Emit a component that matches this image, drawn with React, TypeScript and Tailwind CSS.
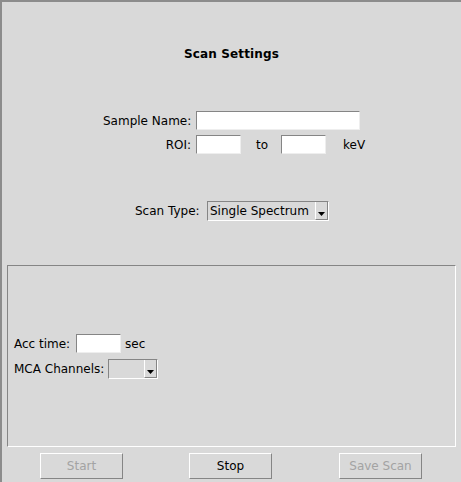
import React from "react";

function Entry({ className }: { className: string }) {
  return (
    <div
      className={
        "h-[19px] bg-white border border-t-[#858585] border-l-[#858585] border-b-[#eeeeee] border-r-[#eeeeee] " +
        className
      }
    />
  );
}

function MenuButton({ className, text }: { className: string; text: string }) {
  return (
    <div
      className={
        "h-[20px] flex items-stretch border border-t-[#858585] border-l-[#858585] border-b-white border-r-white " +
        className
      }
    >
      <div className="flex-1 flex items-center pl-[2px] leading-[14px] whitespace-nowrap overflow-hidden">
        {text}
      </div>
      <div className="w-[13px] flex justify-center items-end pb-[3px] border-l border-l-white border-b border-b-[#858585] border-r border-r-[#858585]">
        <svg width="7" height="4" viewBox="0 0 7 4">
          <polygon points="0,0 7,0 3.5,4" fill="#000" />
        </svg>
      </div>
    </div>
  );
}

function Button({ label, disabled }: { label: string; disabled?: boolean }) {
  return (
    <div
      className={
        "w-[83px] h-[26px] flex items-center justify-center border border-t-white border-l-white border-b-[#858585] border-r-[#858585] leading-[14px] " +
        (disabled ? "text-[#a3a3a3]" : "text-black")
      }
    >
      {label}
    </div>
  );
}

export default function App() {
  return (
    <div className="w-[461px] h-[482px] bg-[#d9d9d9] border-t-2 border-l-2 border-[#8c8c8c] flex flex-col text-[12px] text-black overflow-hidden font-['DejaVu_Sans',sans-serif]">
      <div className="mt-[45px] h-[14px] leading-[14px] text-center font-bold tracking-[0.15px]">Scan Settings</div>

      <div className="mt-[50px] h-[19px] flex items-center pl-[101px]">
        <div className="w-[93px] pr-[5px] text-right leading-[14px] whitespace-nowrap">Sample Name:</div>
        <Entry className="w-[164px]" />
      </div>

      <div className="mt-[5px] h-[19px] flex items-center pl-[101px]">
        <div className="w-[93px] pr-[5px] text-right leading-[14px]">ROI:</div>
        <Entry className="w-[45px]" />
        <span className="ml-[15px] leading-[14px]">to</span>
        <Entry className="ml-[13px] w-[45px]" />
        <span className="ml-[17px] leading-[14px]">keV</span>
      </div>

      <div className="mt-[47px] h-[20px] flex items-center pl-[133px]">
        <span className="w-[72px] leading-[14px] whitespace-nowrap">Scan Type:</span>
        <MenuButton className="w-[122px]" text="Single Spectrum" />
      </div>

      <div className="mt-[44px] ml-[5px] w-[449px] h-[182px] border border-t-[#858585] border-l-[#858585] border-b-white border-r-white flex flex-col pt-[68px] pl-[6px]">
        <div className="h-[19px] flex items-center">
          <span className="w-[62px] leading-[14px] whitespace-nowrap">Acc time:</span>
          <Entry className="w-[45px]" />
          <span className="ml-[4px] leading-[14px]">sec</span>
        </div>
        <div className="mt-[6px] h-[20px] flex items-center">
          <span className="w-[94px] leading-[14px] whitespace-nowrap">MCA Channels:</span>
          <MenuButton className="w-[50px]" text="" />
        </div>
      </div>

      <div className="mt-[6px] flex pl-[38px]">
        <Button label="Start" disabled />
        <div className="ml-[66px]">
          <Button label="Stop" />
        </div>
        <div className="ml-[67px]">
          <Button label="Save Scan" disabled />
        </div>
      </div>
    </div>
  );
}
